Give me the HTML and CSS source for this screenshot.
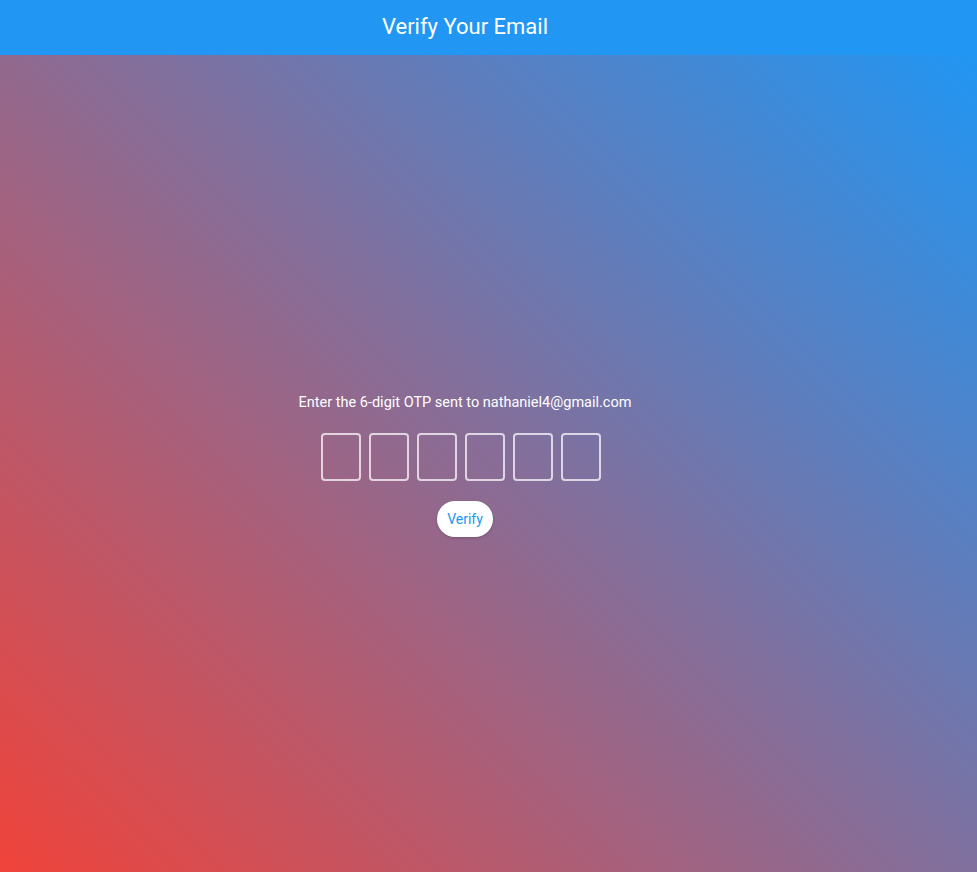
FILE: index.html
```html
<!DOCTYPE html>
<html lang="en">
<head>
<meta charset="utf-8">
<title>Verify Your Email</title>
<link rel="stylesheet" href="styles.css">
</head>
<body>
  <header class="app-bar">
    <h1 class="app-title">Verify Your Email</h1>
  </header>
  <main class="content">
    <div class="otp-card">
      <p class="otp-text">Enter the 6-digit OTP sent to nathaniel4@gmail.com</p>
      <div class="otp-row">
        <input class="otp-box" type="text" maxlength="1">
        <input class="otp-box" type="text" maxlength="1">
        <input class="otp-box" type="text" maxlength="1">
        <input class="otp-box" type="text" maxlength="1">
        <input class="otp-box" type="text" maxlength="1">
        <input class="otp-box" type="text" maxlength="1">
      </div>
      <button class="verify-btn" type="button">Verify</button>
    </div>
  </main>
</body>
</html>
```
FILE: styles.css
```css
html, body {
  margin: 0;
  padding: 0;
  height: 100%;
}
body {
  font-family: Roboto, "Noto Sans", Arial, sans-serif;
  display: flex;
  flex-direction: column;
  min-height: 100vh;
}
.app-bar {
  height: 55px;
  background: #2196F3;
  display: flex;
  align-items: center;
  justify-content: center;
  padding-right: 47px;
  padding-bottom: 1px;
  box-sizing: border-box;
  flex-shrink: 0;
}
.app-title {
  margin: 0;
  color: #fff;
  font-size: 22px;
  font-weight: 400;
  line-height: 1;
}
.content {
  flex: 1;
  background: linear-gradient(45deg, #F0433A, #2196F3);
  display: flex;
  align-items: center;
  justify-content: center;
  padding-right: 47px;
  padding-top: 2px;
}
.otp-card {
  display: flex;
  flex-direction: column;
  align-items: center;
}
.otp-text {
  margin: 0 0 20px;
  color: #fff;
  font-size: 14.5px;
  line-height: 20px;
}
.otp-row {
  display: flex;
  margin-bottom: 20px;
}
.otp-box {
  width: 40px;
  height: 48px;
  box-sizing: border-box;
  margin: 0 8px 0 0;
  padding: 0;
  border: 2px solid rgba(255, 255, 255, 0.72);
  border-radius: 4px;
  background: transparent;
  color: #fff;
  text-align: center;
  font-size: 20px;
  font-family: inherit;
  outline: none;
}
.verify-btn {
  height: 36px;
  padding: 0 10px;
  border: none;
  border-radius: 18px;
  background: #fff;
  color: #2196F3;
  font-family: inherit;
  font-size: 14px;
  box-shadow: 0 1px 3px rgba(0, 0, 0, 0.2);
  cursor: pointer;
}
```
